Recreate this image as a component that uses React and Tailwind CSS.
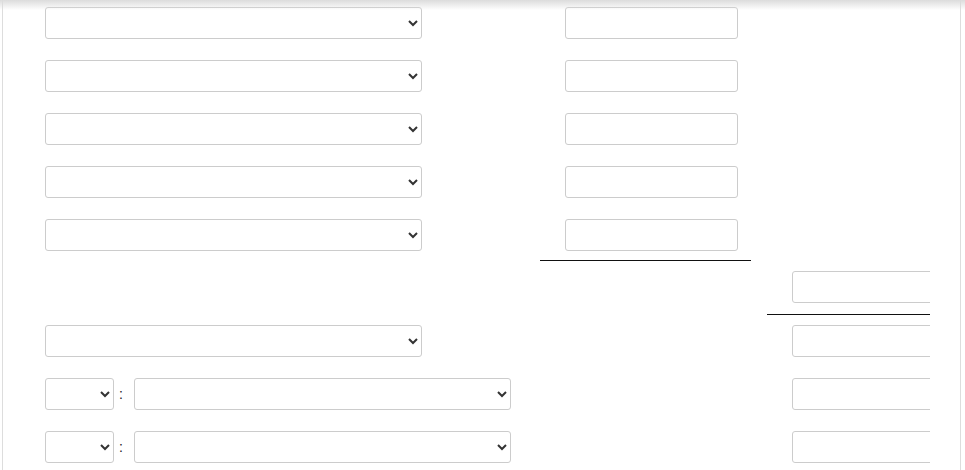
import React from "react";

const selCls =
  "block h-[32px] bg-white border border-[#cccccc] rounded-[3px] text-[14px] text-[#333] font-['Liberation_Sans',Arial,sans-serif]";
const inpCls =
  "block h-[32px] bg-white border border-[#cccccc] rounded-[3px] text-[14px] text-[#333] font-['Liberation_Sans',Arial,sans-serif] outline-none";

function Sel({ w }) {
  return (
    <select className={selCls + " " + w} defaultValue="">
      <option value=""></option>
    </select>
  );
}

function Col2Input() {
  return (
    <div className="w-[210px] pl-[25px] shrink-0">
      <input className={inpCls + " w-[173px]"} />
    </div>
  );
}

function Col3Input() {
  return (
    <div className="w-[163px] pl-[25px] overflow-hidden shrink-0">
      <input className={inpCls + " w-[173px]"} />
    </div>
  );
}

function Row({ children, cls = "" }) {
  return <div className={"flex h-[32px] " + cls}>{children}</div>;
}

export default function App() {
  return (
    <div className="relative w-[965px] h-[470px] overflow-hidden bg-white font-['Liberation_Sans',Arial,sans-serif]">
      <div className="ml-[2px] w-[959px] h-full border-x border-[#dddddd] bg-white">
        <div className="pt-[7px] pl-[42px]">
          {[0, 1, 2, 3, 4].map((i) => (
            <Row key={i} cls={i === 0 ? "" : "mt-[21px]"}>
              <div className="w-[495px] shrink-0">
                <Sel w="w-[377px]" />
              </div>
              <Col2Input />
            </Row>
          ))}
          <div className="flex mt-[9px]">
            <div className="w-[495px] shrink-0" />
            <div className="w-[211px] h-px bg-[#111]" />
          </div>
          <Row cls="mt-[10px]">
            <div className="w-[495px] shrink-0" />
            <div className="w-[227px] shrink-0" />
            <Col3Input />
          </Row>
          <div className="flex mt-[11px]">
            <div className="w-[722px] shrink-0" />
            <div className="w-[163px] h-px bg-[#111]" />
          </div>
          <Row cls="mt-[10px]">
            <div className="w-[495px] shrink-0">
              <Sel w="w-[377px]" />
            </div>
            <div className="w-[227px] shrink-0" />
            <Col3Input />
          </Row>
          {[0, 1].map((i) => (
            <Row key={i} cls="mt-[21px]">
              <div className="w-[495px] shrink-0 flex items-center">
                <Sel w="w-[69px]" />
                <span className="w-[20px] pl-[5px] text-[14px] text-[#222] leading-none">:</span>
                <Sel w="w-[377px]" />
              </div>
              <div className="w-[227px] shrink-0" />
              <Col3Input />
            </Row>
          ))}
        </div>
      </div>
      <div className="absolute top-0 left-0 w-full h-[10px] bg-gradient-to-b from-[#dcdcdc] to-transparent pointer-events-none" />
    </div>
  );
}
